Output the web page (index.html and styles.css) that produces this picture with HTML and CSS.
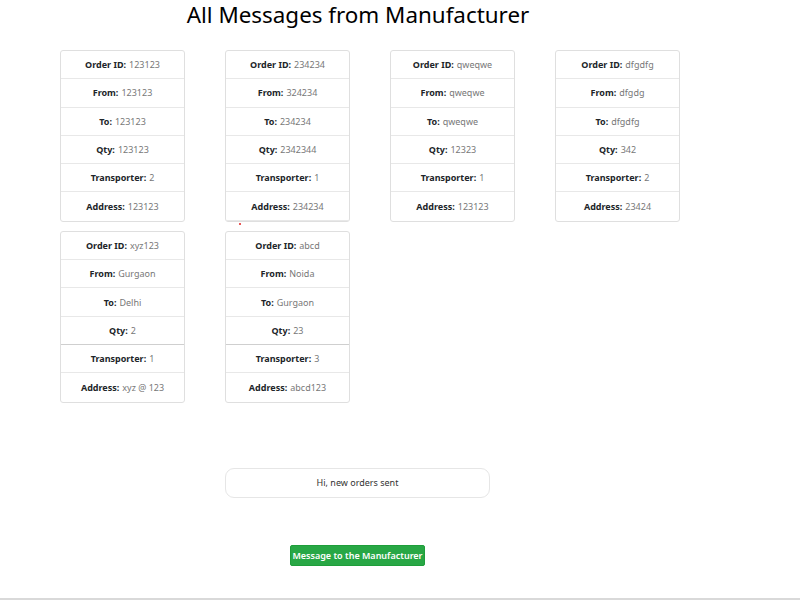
FILE: index.html
```html
<!DOCTYPE html>
<html lang="en">
<head>
  <meta charset="UTF-8" />
  <meta name="viewport" content="width=device-width, initial-scale=1.0"/>
  <title>Messages</title>
  <link rel="stylesheet" href="styles.css">
</head>
<body>
  <div class="page">
    <h1 class="title">All Messages from Manufacturer</h1>

    <div class="card-grid">
      <div class="card">
        <div class="item"><b>Order ID:</b> 123123</div>
        <div class="item"><b>From:</b> 123123</div>
        <div class="item"><b>To:</b> 123123</div>
        <div class="item"><b>Qty:</b> 123123</div>
        <div class="item"><b>Transporter:</b> 2</div>
        <div class="item"><b>Address:</b> 123123</div>
      </div>
      <div class="card">
        <div class="item"><b>Order ID:</b> 234234</div>
        <div class="item"><b>From:</b> 324234</div>
        <div class="item"><b>To:</b> 234234</div>
        <div class="item"><b>Qty:</b> 2342344</div>
        <div class="item"><b>Transporter:</b> 1</div>
        <div class="item"><b>Address:</b> 234234</div>
        <span class="dot"></span>
      </div>
      <div class="card">
        <div class="item"><b>Order ID:</b> qweqwe</div>
        <div class="item"><b>From:</b> qweqwe</div>
        <div class="item"><b>To:</b> qweqwe</div>
        <div class="item"><b>Qty:</b> 12323</div>
        <div class="item"><b>Transporter:</b> 1</div>
        <div class="item"><b>Address:</b> 123123</div>
      </div>
      <div class="card">
        <div class="item"><b>Order ID:</b> dfgdfg</div>
        <div class="item"><b>From:</b> dfgdg</div>
        <div class="item"><b>To:</b> dfgdfg</div>
        <div class="item"><b>Qty:</b> 342</div>
        <div class="item"><b>Transporter:</b> 2</div>
        <div class="item"><b>Address:</b> 23424</div>
      </div>
      <div class="card">
        <div class="item"><b>Order ID:</b> xyz123</div>
        <div class="item"><b>From:</b> Gurgaon</div>
        <div class="item"><b>To:</b> Delhi</div>
        <div class="item dark"><b>Qty:</b> 2</div>
        <div class="item"><b>Transporter:</b> 1</div>
        <div class="item"><b>Address:</b> xyz @ 123</div>
      </div>
      <div class="card">
        <div class="item"><b>Order ID:</b> abcd</div>
        <div class="item"><b>From:</b> Noida</div>
        <div class="item"><b>To:</b> Gurgaon</div>
        <div class="item dark"><b>Qty:</b> 23</div>
        <div class="item"><b>Transporter:</b> 3</div>
        <div class="item"><b>Address:</b> abcd123</div>
      </div>
    </div>

    <div class="message">Hi, new orders sent</div>
    <button class="send-btn">Message to the Manufacturer</button>
  </div>
  <div class="bottom-line"></div>
</body>
</html>
```

FILE: styles.css
```css
html, body {
  margin: 0;
  padding: 0;
  background: #fff;
}
body {
  font-family: "Noto Sans", "Open Sans", Arial, sans-serif;
  color: #212529;
  height: 600px;
  display: flex;
  flex-direction: column;
  overflow: hidden;
}
.page {
  flex: 1;
}
.title {
  width: 716px;
  margin: 0;
  padding-top: 1px;
  text-align: center;
  font-size: 22.4px;
  font-weight: 400;
  line-height: 28px;
  color: #000;
}
.card-grid {
  display: grid;
  grid-template-columns: repeat(4, 125px);
  column-gap: 40px;
  row-gap: 9px;
  margin: 21px 0 0 60px;
}
.card {
  position: relative;
  border: 1px solid #dfdfdf;
  border-radius: 3px;
  background: #fff;
}
.item {
  height: 28.3px;
  box-sizing: border-box;
  display: flex;
  align-items: center;
  justify-content: center;
  font-size: 9px;
  color: #777;
  border-bottom: 1px solid #e8e8e8;
}
.item:last-child {
  border-bottom: none;
}
.item b {
  color: #212529;
  font-weight: 700;
  margin-right: 3px;
}
.item.dark {
  border-bottom-color: #cfcfcf;
}
.dot {
  position: absolute;
  left: 13px;
  bottom: -4px;
  width: 2px;
  height: 2px;
  border-radius: 50%;
  background: #e02020;
}
.message {
  width: 265px;
  height: 30px;
  box-sizing: border-box;
  margin: 65px 0 0 225px;
  border: 1px solid #e6e6e6;
  border-radius: 9px;
  display: flex;
  align-items: center;
  justify-content: center;
  font-size: 9px;
  color: #333;
}
.send-btn {
  display: block;
  margin: 47px 0 0 290px;
  width: 135px;
  height: 21px;
  padding: 0;
  border: 1px solid #1e9e3a;
  border-radius: 2px;
  background: #28a745;
  color: #fff;
  font-family: inherit;
  font-size: 9px;
  font-weight: 600;
}
.bottom-line {
  height: 2px;
  background: #d9d9d9;
  margin-bottom: 0;
}
```
